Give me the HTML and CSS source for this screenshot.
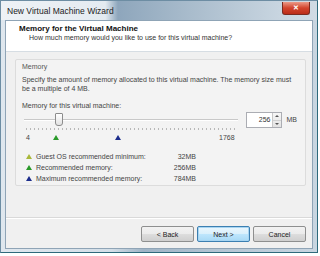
FILE: index.html
```html
<!DOCTYPE html>
<html lang="en">
<head>
    <meta charset="UTF-8">
    <title>New Virtual Machine Wizard</title>
    <link rel="stylesheet" href="styles.css">
</head>
<body>
    <div class="window">
        <!-- Title bar -->
        <div class="titlebar">
            <span class="title">New Virtual Machine Wizard</span>
            <div class="close">&#x2715;</div>
        </div>

        <div class="client">
            <!-- Header -->
            <div class="header">
                <div class="header-title">Memory for the Virtual Machine</div>
                <div class="header-sub">How much memory would you like to use for this virtual machine?</div>
            </div>

            <!-- Content -->
            <div class="content">
                <div class="group">
                    <div class="group-label">Memory</div>
                    <div class="desc">Specify the amount of memory allocated to this virtual machine. The memory size must be a multiple of 4 MB.</div>
                    <div class="field-label">Memory for this virtual machine:</div>

                    <div class="slider-row">
                        <div class="slider">
                            <div class="track"></div>
                            <div class="thumb"></div>
                            <div class="ticks"></div>
                        </div>
                        <div class="spin">
                            <div class="spin-value">256</div>
                            <div class="spin-buttons">
                                <span class="arrow up"></span>
                                <span class="arrow down"></span>
                            </div>
                        </div>
                        <span class="unit">MB</span>
                    </div>

                    <div class="scale">
                        <span class="scale-min">4</span>
                        <span class="marker green"></span>
                        <span class="marker blue"></span>
                        <span class="scale-max">1768</span>
                    </div>

                    <div class="legend">
                        <div class="legend-row">
                            <span class="tri yellow"></span>
                            <span class="legend-text">Guest OS recommended minimum:</span>
                            <span class="legend-value">32MB</span>
                        </div>
                        <div class="legend-row">
                            <span class="tri green"></span>
                            <span class="legend-text">Recommended memory:</span>
                            <span class="legend-value">256MB</span>
                        </div>
                        <div class="legend-row">
                            <span class="tri blue"></span>
                            <span class="legend-text">Maximum recommended memory:</span>
                            <span class="legend-value">784MB</span>
                        </div>
                    </div>
                </div>
            </div>

            <!-- Footer -->
            <div class="footer">
                <button class="button">&lt; Back</button>
                <button class="button default">Next &gt;</button>
                <button class="button cancel">Cancel</button>
            </div>
        </div>
    </div>
</body>
</html>
```

FILE: styles.css
```css
body {
    margin: 0;
    padding: 0;
    background: #ffffff;
    font-family: 'Liberation Sans', Arial, sans-serif;
    color: #333;
}
.window {
    width: 316px;
    height: 251px;
    border: 1px solid #6d8da3;
    border-right-color: #2e6a7c;
    border-bottom-color: #2e6a7c;
    background: linear-gradient(90deg, #dfe7ee 0%, #d4dfe8 35%, #9fb4c6 45%, #b5c6d4 70%, #c9d6e1 100%);
    display: flex;
    flex-direction: column;
}
.titlebar {
    height: 19px;
    display: flex;
    align-items: center;
    justify-content: space-between;
    padding: 0 7px 0 6px;
    background: linear-gradient(90deg, #eef2f6 0%, #e4ebf1 33%, #8ea6bc 37%, #a9bccc 60%, #c8d5e0 88%, #d0dbe4 100%);
}
.title {
    font-size: 8.5px;
    color: #222;
}
.close {
    width: 26px;
    height: 12px;
    margin-top: -5px;
    border: 1px solid #7a2a20;
    border-top: none;
    border-radius: 0 0 3px 3px;
    background: linear-gradient(#eb9a88, #d2442d 50%, #bb2c18);
    color: #fff;
    font-size: 7px;
    font-weight: bold;
    text-align: center;
    line-height: 12px;
}
.client {
    flex: 1;
    margin: 0 4px 3px 4px;
    border: 1px solid #8fa4b6;
    background: #f0f0f0;
    display: flex;
    flex-direction: column;
}
.header {
    height: 31px;
    background: #ffffff;
    border-bottom: 1px solid #d6dde3;
    padding: 3px 0 0 13px;
    box-sizing: border-box;
}
.header-title {
    font-size: 8px;
    font-weight: bold;
    color: #111;
}
.header-sub {
    font-size: 7px;
    color: #333;
    padding-left: 10px;
    margin-top: 1px;
}
.content {
    flex: 1;
    padding: 7px 6px 0 9px;
}
.group {
    height: 127px;
    border: 1px solid #dcdcdc;
    border-radius: 2px;
    background: #f3f3f3;
    box-sizing: border-box;
    padding: 3px 8px 0 6px;
    font-size: 7px;
    color: #444;
}
.group-label {
    color: #555;
}
.desc {
    margin-top: 5px;
    line-height: 9px;
    color: #444;
}
.field-label {
    margin-top: 9px;
}
.slider-row {
    display: flex;
    align-items: flex-start;
    margin-top: 3px;
}
.slider {
    position: relative;
    width: 214px;
    height: 20px;
    margin-left: 2px;
}
.track {
    position: absolute;
    left: 0;
    right: 0;
    top: 7px;
    height: 1px;
    background: #c8c8c8;
    border-bottom: 1px solid #fff;
}
.thumb {
    position: absolute;
    left: 31px;
    top: 1px;
    width: 6px;
    height: 11px;
    border: 1px solid #8c8c8c;
    border-radius: 1px 1px 3px 3px;
    background: linear-gradient(#ffffff, #e2e2e2);
}
.ticks {
    position: absolute;
    left: 2px;
    right: 0;
    top: 16px;
    height: 2px;
    background: repeating-linear-gradient(90deg, #b8b8b8 0 1px, transparent 1px 4px);
}
.spin {
    display: flex;
    margin-left: 8px;
    height: 14px;
    border: 1px solid #abadb3;
    background: #fff;
}
.spin-value {
    width: 24px;
    text-align: right;
    line-height: 14px;
    padding-right: 1px;
    color: #333;
}
.spin-buttons {
    width: 8px;
    display: flex;
    flex-direction: column;
    border-left: 1px solid #c8c8c8;
    background: linear-gradient(#f6f6f6, #e3e3e3);
}
.arrow {
    flex: 1;
    display: flex;
    align-items: center;
    justify-content: center;
}
.arrow.up::before {
    content: '';
    border: 2px solid transparent;
    border-bottom: 2px solid #555;
    border-top: none;
}
.arrow.down {
    border-top: 1px solid #d0d0d0;
}
.arrow.down::before {
    content: '';
    border: 2px solid transparent;
    border-top: 2px solid #555;
    border-bottom: none;
}
.unit {
    margin-left: 5px;
    line-height: 16px;
    color: #444;
}
.scale {
    display: flex;
    align-items: center;
    height: 10px;
    padding-left: 4px;
}
.scale-min {
    width: 27px;
}
.marker {
    width: 0;
    height: 0;
    border-left: 3px solid transparent;
    border-right: 3px solid transparent;
    border-bottom: 5px solid #2a9a2a;
}
.marker.blue {
    margin-left: 56px;
    border-bottom-color: #1c2d8c;
}
.scale-max {
    margin-left: 98px;
}
.legend {
    margin-top: 9px;
    padding-left: 4px;
    width: 170px;
}
.legend-row {
    display: flex;
    align-items: center;
    height: 11px;
    white-space: nowrap;
}
.tri {
    width: 0;
    height: 0;
    border-left: 3px solid transparent;
    border-right: 3px solid transparent;
    border-bottom: 5px solid #2a9a2a;
    margin-right: 4px;
}
.tri.yellow {
    border-bottom-color: #a9b83a;
}
.tri.blue {
    border-bottom-color: #1c2d8c;
}
.legend-value {
    margin-left: auto;
}
.footer {
    height: 31px;
    border-top: 1px solid #d9d9d9;
    box-shadow: inset 0 1px 0 #fff;
    display: flex;
    justify-content: flex-end;
    align-items: flex-end;
    gap: 3px;
    padding: 0 6px 6px 0;
    box-sizing: border-box;
}
.button {
    width: 53px;
    height: 16px;
    font-family: 'Liberation Sans', Arial, sans-serif;
    font-size: 7px;
    color: #222;
    border: 1px solid #8e8f8f;
    border-radius: 2px;
    background: linear-gradient(#f2f2f2 0%, #ebebeb 50%, #dddddd 51%, #cfcfcf 100%);
    padding: 0;
}
.button.default {
    border-color: #3c7fb1;
    box-shadow: inset 0 0 0 1px #a7d5f2;
    background: linear-gradient(#eaf6fd 0%, #d9f0fc 50%, #bee6fd 51%, #a7d9f5 100%);
}
```
